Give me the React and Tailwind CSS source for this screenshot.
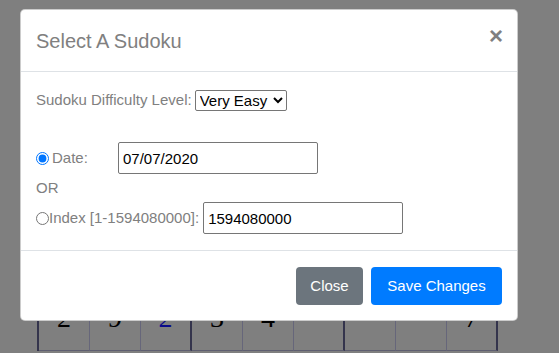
import React from "react";

const row = [
  { v: "2", thick: false },
  { v: "9", thick: false },
  { v: "2", thick: true, given: true },
  { v: "3", thick: false },
  { v: "4", thick: false },
  { v: "", thick: true },
  { v: "", thick: false },
  { v: "", thick: false },
  { v: "7", thick: true },
];

export default function App() {
  return (
    <div className="relative w-[559px] h-[353px] overflow-hidden bg-[#7f7f7f] font-['Liberation_Sans',Arial,sans-serif]">
      {/* sudoku board behind the backdrop */}
      <div className="pt-[299px] pl-[37px]">
        <div className="flex border-l-2 border-[#34344c]">
          {row.map((c, i) => (
            <div
              key={i}
              className={`h-[52px] w-[51px] flex items-center justify-center border-b border-b-[#5e5e70] font-['Liberation_Serif',serif] text-[28px] leading-none pb-[14px] ${
                c.thick ? "border-r-2 border-r-[#34344c]" : "border-r border-r-[#66667a]"
              } ${c.given ? "text-[#0a0a8a]" : "text-black"}`}
            >
              {c.v}
            </div>
          ))}
        </div>
      </div>

      {/* modal */}
      <div className="absolute left-[20px] top-[9px] w-[498px] bg-white rounded-[5px] border border-black/20 text-[#808080]">
        <div className="flex items-center justify-between px-[15px] h-[62px] border-b border-[#dee2e6]">
          <h5 className="text-[20px] leading-[30px] text-[#808080] pt-[1px]">Select A Sudoku</h5>
          <button className="text-[24px] font-bold leading-none text-[#808080] -mr-[1px] -mt-[9px]">
            ×
          </button>
        </div>

        <div className="px-[15px] pt-4 pb-4 text-[15px]">
          <div className="flex items-center h-[24px]">
            <span>Sudoku Difficulty Level:</span>
            <select className="ml-[3px] w-[92px] h-[21px] text-[15px] text-black border border-[#767676] rounded-[2px] bg-white">
              <option>Very Easy</option>
              <option>Easy</option>
              <option>Medium</option>
              <option>Hard</option>
            </select>
          </div>

          <div className="flex items-center h-[32px] mt-[30px]">
            <input type="radio" name="mode" defaultChecked className="m-0 w-[13px] h-[13px]" />
            <span className="ml-[3px] w-[66px]">Date:</span>
            <input
              type="text"
              defaultValue="07/07/2020"
              className="w-[200px] h-[32px] border border-[#767676] rounded-[2px] px-[4px] text-black text-[15px]"
            />
          </div>

          <div className="h-[28px] flex items-center">OR</div>

          <div className="flex items-center h-[32px]">
            <input type="radio" name="mode" className="m-0 w-[13px] h-[13px]" />
            <span className="mr-[4px]">Index [1-1594080000]:</span>
            <input
              type="text"
              defaultValue="1594080000"
              className="w-[200px] h-[32px] border border-[#767676] rounded-[2px] px-[4px] text-black text-[15px]"
            />
          </div>
        </div>

        <div className="flex justify-end gap-2 px-[15px] pt-4 pb-[15px] border-t border-[#dee2e6]">
          <button className="h-[38px] w-[67px] rounded-[4px] bg-[#6c757d] text-white text-[15px]">
            Close
          </button>
          <button className="h-[38px] w-[131px] rounded-[4px] bg-[#007bff] text-white text-[15px]">
            Save Changes
          </button>
        </div>
      </div>
    </div>
  );
}
